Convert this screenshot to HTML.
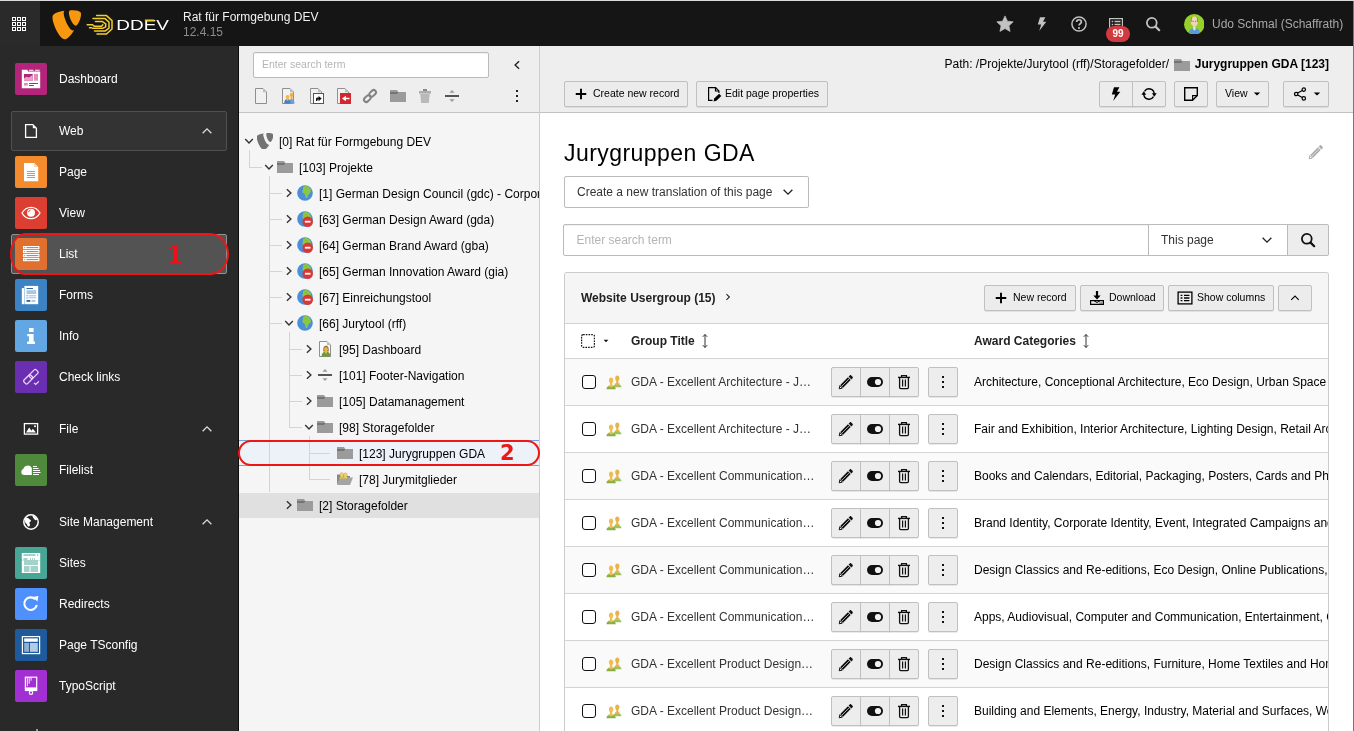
<!DOCTYPE html>
<html lang="en"><head><meta charset="utf-8"><title>List - Jurygruppen GDA [123]</title>
<style>
*{box-sizing:border-box;margin:0;padding:0}
html,body{width:1354px;height:731px;overflow:hidden;background:#fff}
body{font-family:"Liberation Sans",Arial,sans-serif;font-size:12px;color:#000;position:relative}
svg{display:block}
.abs{position:absolute}
.gs{will-change:transform}
#topline{position:absolute;left:0;top:0;width:1354px;height:1px;background:#dcdcdc}
#topbar{position:absolute;left:0;top:1px;width:1354px;height:45px;background:#151515;color:#fff}
#gridbtn{position:absolute;left:0;top:0;width:40px;height:45px;background:#2a2a2a}
#menu{position:absolute;left:0;top:46px;width:238px;height:685px;background:#292929;color:#fff}
#menuline{position:absolute;left:238px;top:46px;width:1px;height:685px;background:#0c0c0c}
.mi{position:absolute;left:15px;width:32px;height:32px;border-radius:2px}
.mi svg{position:absolute;left:6px;top:6px}
.ml{position:absolute;left:59px;font-size:12px;line-height:14px;color:#fff;white-space:nowrap}
.mg{position:absolute;left:23px}
#tree{position:absolute;left:239px;top:46px;width:300px;height:685px;background:#f5f5f5;overflow:hidden}
#treeborder{position:absolute;left:539px;top:46px;width:1px;height:685px;background:#cdcdcd}
#treetb{position:absolute;left:0;top:0;width:300px;height:67px;background:#eee;border-bottom:1px solid #c3c3c3}
.tn{position:absolute;left:0;width:300px;height:26px}
.tn .tx{position:absolute;top:7px;font-size:12px;line-height:14px;white-space:nowrap;color:#000}
.tn svg{position:absolute;top:5px}
.tl{position:absolute;background:#d4d4d4}
#content{position:absolute;left:540px;top:46px;width:813px;height:685px;background:#fff;overflow:hidden}
#rightedge{position:absolute;left:1353px;top:1px;width:1px;height:730px;background:#777}
#dochead{position:absolute;left:0;top:0;width:813px;height:67px;background:#eee;border-bottom:1px solid #c3c3c3}
.btn{position:absolute;height:26px;background:#ececec;border:1px solid #c0c0c0;border-radius:2px;font-size:10.5px;line-height:23px;color:#000;white-space:nowrap;box-shadow:0 1px 0 rgba(0,0,0,.08)}
.btn svg{position:absolute}
.btn span{position:absolute;top:0}
h1{position:absolute;font-weight:400;white-space:nowrap}
.row{position:absolute;left:0;width:763px;height:47px;border-top:1px solid #d4d4d4}
.row .cb{position:absolute;left:17px;top:16px;width:14px;height:14px;border:1.5px solid #111;border-radius:3px;background:#fff}
.row .gt{position:absolute;left:66px;top:16px;font-size:12px;line-height:14px;color:#333;white-space:nowrap}
.row .ac{position:absolute;left:409px;top:16px;font-size:12px;line-height:14px;color:#000;white-space:nowrap}
.ib{position:absolute;top:8px;width:30px;height:30px;background:#ededed;border:1px solid #c0c0c0;box-shadow:0 1px 0 rgba(0,0,0,.08)}
.ib svg{position:absolute;left:6px;top:6px}
</style></head>
<body>
<div id="topline"></div>
<div id="topbar" class="gs">
<div id="gridbtn"><svg width="16" height="16" viewBox="0 0 16 16" style="color:#fff;position:absolute;left:11px;top:15px"><rect x="1.5" y="1.5" width="3" height="3" fill="none" stroke="currentColor" stroke-width="1"/><rect x="6.5" y="1.5" width="3" height="3" fill="none" stroke="currentColor" stroke-width="1"/><rect x="11.5" y="1.5" width="3" height="3" fill="none" stroke="currentColor" stroke-width="1"/><rect x="1.5" y="6.5" width="3" height="3" fill="none" stroke="currentColor" stroke-width="1"/><rect x="6.5" y="6.5" width="3" height="3" fill="none" stroke="currentColor" stroke-width="1"/><rect x="11.5" y="6.5" width="3" height="3" fill="none" stroke="currentColor" stroke-width="1"/><rect x="1.5" y="11.5" width="3" height="3" fill="none" stroke="currentColor" stroke-width="1"/><rect x="6.5" y="11.5" width="3" height="3" fill="none" stroke="currentColor" stroke-width="1"/><rect x="11.5" y="11.5" width="3" height="3" fill="none" stroke="currentColor" stroke-width="1"/></svg></div>
<svg class="abs" style="left:47.6px;top:4.6px" width="37.5" height="37.5" viewBox="0 0 16 16"><path d="M11.1 10.3c-.2 0-.3.1-.5.1-1.6 0-3.9-5.5-3.9-7.3 0-.7.2-.9.4-1.1-1.9.2-4.2.9-4.9 1.8-.2.2-.3.6-.3 1 0 2.9 3.1 9.4 5.2 9.4 1 0 2.7-1.6 4-3.9M10.1 1.8c2 0 4 .3 4 1.5 0 2.3-1.5 5.1-2.2 5.1-1.3 0-3-3.7-3-5.5 0-.9.3-1.1 1.2-1.1" fill="#f8980f"/></svg>
<svg class="abs" style="left:86px;top:13px" width="86" height="22" viewBox="0 0 86 22"><g fill="none" stroke="#f2cd2e" stroke-width="1.5" stroke-linejoin="round" stroke-linecap="round"><path d="M10.6 1.6h9.9L26 6.6V15l-5.5 5h-9.5"/><path d="M7 4.6h12l4 3.5v6l-4 3H8.5"/><path d="M9.5 7.6h7l3.2 2.2v3L17 14.2H6.5"/><path d="M1.2 10.8h5.3l1.8 1.4h7.2l1.3-1.3"/><path d="M3.5 13.8h2"/></g><text x="30.3" y="15.7" font-family="Liberation Sans,Arial,sans-serif" font-size="14" fill="#fff" textLength="52.6" lengthAdjust="spacingAndGlyphs">DDEV</text><rect x="58.9" y="5.5" width="9.3" height="1.7" fill="#f2cd2e"/></svg>
<div class="abs" style="left:183px;top:9px;font-size:12px;line-height:14px;color:#f2f2f2;white-space:nowrap">Rat für Formgebung DEV</div>
<div class="abs" style="left:183px;top:24px;font-size:12px;line-height:14px;color:#8c8c8c;white-space:nowrap">12.4.15</div>
<svg width="18" height="18" viewBox="0 0 16 16" style="color:#c2c2c2;position:absolute;left:996px;top:14px"><path d="M8 .8l2.2 4.7 5.1.6-3.8 3.5 1 5L8 12.1 3.5 14.6l1-5L.7 6.1l5.1-.6z" fill="currentColor" stroke="currentColor" stroke-width=".6" stroke-linejoin="round"/></svg>
<svg width="16" height="16" viewBox="0 0 16 16" style="color:#c2c2c2;position:absolute;left:1033px;top:15px"><path d="M7 1.2h5.4L10 5.7h3.3L6.2 14.9l2-6.5H4.8z" fill="currentColor"/></svg>
<svg width="18" height="18" viewBox="0 0 16 16" style="color:#c2c2c2;position:absolute;left:1070px;top:14px"><circle cx="8" cy="8" r="6.3" fill="none" stroke="currentColor" stroke-width="1.3"/><path d="M5.9 6.3c0-1.2.9-2.1 2.1-2.1s2.1.8 2.1 2c0 1.5-2.1 1.6-2.1 3.1" fill="none" stroke="currentColor" stroke-width="1.5"/><circle cx="8" cy="11.6" r=".95" fill="currentColor"/></svg>
<svg width="16" height="16" viewBox="0 0 16 16" style="color:#c2c2c2;position:absolute;left:1108px;top:15px"><rect x="1.6" y="2.6" width="12.8" height="10.8" fill="none" stroke="currentColor" stroke-width="1.2"/><path d="M3.7 5.5h1.5M6.5 5.5h6M3.7 8.5h1.5M6.5 8.5h6" stroke="currentColor" stroke-width="1.6"/></svg>
<div class="abs" style="left:1106px;top:25px;width:24px;height:16px;border-radius:8px;background:#d13a3f;color:#fff;font-size:10px;font-weight:700;line-height:16px;text-align:center">99</div>
<svg width="16" height="16" viewBox="0 0 16 16" style="color:#c2c2c2;position:absolute;left:1145px;top:15px"><circle cx="6.8" cy="6.8" r="4.9" fill="none" stroke="currentColor" stroke-width="1.8"/><path d="M10.6 10.6l3.6 3.6" stroke="currentColor" stroke-width="2.2" stroke-linecap="round"/></svg>
<svg class="abs" style="left:1183.6px;top:12.8px" width="20.6" height="20.6" viewBox="0 0 22 22"><defs><clipPath id="av"><circle cx="11" cy="11" r="11"/></clipPath></defs><g clip-path="url(#av)"><rect width="22" height="22" fill="#97d02b"/><path d="M4.8 23c0-5.2 1.7-7.7 6.3-7.7s6.3 2.5 6.3 7.7z" fill="#5b9bd5"/><path d="M10 13h2.2v3.2l-1.1 1.5L10 16.2z" fill="#e9f3dc"/><ellipse cx="11.1" cy="8" rx="3.8" ry="5.3" fill="#f1d3b8"/><path d="M7.3 8.5c-.4-3 .3-5 1.5-5.6-.6 1.5-.7 3.5-.6 5.6zM14.9 8.5c.4-3-.3-5-1.5-5.6.6 1.5.7 3.5.6 5.6z" fill="#9a7a55"/><circle cx="9.6" cy="7.7" r=".55" fill="#5a4634"/><circle cx="12.6" cy="7.7" r=".55" fill="#5a4634"/></g></svg>
<div class="abs" style="left:1212px;top:16px;font-size:12px;line-height:14px;color:#a8a8a8;white-space:nowrap">Udo Schmal (Schaffrath)</div>
</div>
<div id="menu" class="gs">
<div class="mi" style="top:17px;background:#b2257a"><svg width="20" height="20" viewBox="0 0 20 20" style=""><path d="M.8.8h5.6l.7 1.7H19.2v16.7H.8z" fill="#fff"/><path d="M8 .8h4.5v.9H8zM14 .8h4.6v.9H14z" fill="#fff"/><path d="M3 5h8.7v6.7H3z" fill="#b2257a"/><path d="M3 9.2l2.6-1.5 2.4.8 3.7-2.7v5.9H3z" fill="#e9a3c9"/><path d="M13 5h4v6.7h-4z" fill="#e58bb8"/><path d="M3 14h3.8v2.6H3z" fill="#e58bb8"/><path d="M8 14h9v.9H8zM8 16h4.8v.9H8z" fill="#b2257a"/></svg></div>
<div class="ml" style="top:26px">Dashboard</div>
<div class="abs" style="left:11px;top:65px;width:216px;height:40px;background:#333;border:1px solid #505050;border-radius:2px"></div>
<div class="mg" style="top:77px"><svg width="16" height="16" viewBox="0 0 16 16" style=""><path d="M2.6 1.6h7.2l3.6 3.6v9.2H2.6z" fill="none" stroke="#fff" stroke-width="1.3"/><path d="M9.8 1.6v3.6h3.6z" fill="#fff"/></svg></div>
<div class="ml" style="top:78px">Web</div>
<svg width="14" height="14" viewBox="0 0 16 16" style="color:#dcdcdc;position:absolute;left:200px;top:78px"><path d="M3 10.5l5-5 5 5" fill="none" stroke="currentColor" stroke-width="1.5"/></svg>
<div class="mi" style="top:110px;background:#f48b2d"><svg width="20" height="20" viewBox="0 0 20 20" style=""><path d="M3 .9h10.2l4 4V19.2H3z" fill="#fff"/><path d="M13.2.9v4h4z" fill="#fbd3ad"/><path d="M6 9h8v1H6zM6 11h8v1H6zM6 13h8v1H6zM6 15h8v1H6z" fill="#f48b2d"/></svg></div>
<div class="ml" style="top:119px">Page</div>
<div class="mi" style="top:151px;background:#dc3e32"><svg width="20" height="20" viewBox="0 0 20 20" style=""><path d="M1 10C3.2 6 6.3 4.3 10 4.3S16.8 6 19 10c-2.2 4-5.3 5.7-9 5.7S3.2 14 1 10z" fill="none" stroke="#fff" stroke-width="1.3"/><circle cx="10" cy="9.7" r="4" fill="#fff"/><path d="M7.6 9.3a2.5 2.5 0 0 1 2-2.3" fill="none" stroke="#dc3e32" stroke-width=".9"/></svg></div>
<div class="ml" style="top:160px">View</div>
<div class="abs" style="left:11px;top:188px;width:216px;height:40px;background:#535353;border:1px solid #8d9492;border-radius:2px"></div>
<div class="mi" style="top:192px;background:#e0702f"><svg width="20" height="20" viewBox="0 0 20 20" style=""><rect x="2" y="2" width="16.4" height="3.2" fill="#fff"/><rect x="5.5" y="3.1" width="11.8" height="1" fill="#e0702f"/><rect x="3.2" y="3.1" width="1" height="1" fill="#e0702f"/><rect x="2" y="6" width="16.4" height="3.2" fill="#fff"/><rect x="5.5" y="7.1" width="11.8" height="1" fill="#e0702f"/><rect x="3.2" y="7.1" width="1" height="1" fill="#e0702f"/><rect x="2" y="10" width="16.4" height="3.2" fill="#fff"/><rect x="5.5" y="11.1" width="11.8" height="1" fill="#e0702f"/><rect x="3.2" y="11.1" width="1" height="1" fill="#e0702f"/><rect x="2" y="14" width="16.4" height="3.2" fill="#fff"/><rect x="5.5" y="15.1" width="11.8" height="1" fill="#e0702f"/><rect x="3.2" y="15.1" width="1" height="1" fill="#e0702f"/></svg></div>
<div class="ml" style="top:201px">List</div>
<div class="mi" style="top:233px;background:#3d82c3"><svg width="20" height="20" viewBox="0 0 20 20" style=""><path d="M.8 3.1h2.2V19.2H.8z" fill="#fff"/><path d="M3.4.9h13.8V19.2H3.4z" fill="#fff"/><path d="M5.5 3h6.5v1H5.5z" fill="#2f6aa6"/><path d="M5.5 5.2h9.7V9H5.5z" fill="#a9c6e4"/><path d="M5.5 10.3h1v1h-1zM5.5 12.4h1v1h-1z" fill="#2f6aa6"/><path d="M7.5 10.4h7.7v.8H7.5zM7.5 12.5h7.7v.8H7.5z" fill="#7ba6d2"/><path d="M5.5 15h3.8v1.9H5.5z" fill="#2f6aa6"/><path d="M10.5 15h3.8v1.9h-3.8z" fill="#a9c6e4"/></svg></div>
<div class="ml" style="top:242px">Forms</div>
<div class="mi" style="top:274px;background:#62a7e3"><svg width="20" height="20" viewBox="0 0 20 20" style=""><path d="M8 2h4.6v4H8zM6.2 8h6.4v7.5H14V18H6.2v-2.5H8v-5.2H6.2z" fill="#fff"/></svg></div>
<div class="ml" style="top:283px">Info</div>
<div class="mi" style="top:315px;background:#6a2fb0"><svg width="20" height="20" viewBox="0 0 20 20" style=""><g fill="none" stroke="#f1dcff" stroke-width="1.2"><rect x="-4.8" y="-2.5" width="9.6" height="5" rx="1.4" transform="translate(7.2 12.4) rotate(-45)"/><rect x="-4.8" y="-2.5" width="9.6" height="5" rx="1.4" transform="translate(12.6 7) rotate(-45)"/><path d="M13 15.8l1.7 1.7 3.2-3.2"/></g></svg></div>
<div class="ml" style="top:324px">Check links</div>
<div class="mg" style="top:375px"><svg width="16" height="16" viewBox="0 0 16 16" style=""><rect x="1.4" y="2.6" width="13.2" height="10.5" fill="none" stroke="#fff" stroke-width="1.3"/><path d="M3 11.5l3.2-5 2.2 3.3 1.5-2 3 3.7z" fill="#fff"/><circle cx="12" cy="5.2" r="1" fill="#fff"/></svg></div>
<div class="ml" style="top:376px">File</div>
<svg width="14" height="14" viewBox="0 0 16 16" style="color:#dcdcdc;position:absolute;left:200px;top:376px"><path d="M3 10.5l5-5 5 5" fill="none" stroke="currentColor" stroke-width="1.5"/></svg>
<div class="mi" style="top:408px;background:#4f8a3c"><svg width="20" height="20" viewBox="0 0 20 20" style=""><path d="M.3 12a3 3 0 0 1 2-2.9A4.6 4.6 0 0 1 10.8 8v7H3.3a3 3 0 0 1-3-3z" fill="#fff"/><path d="M12 6h4v1h-4zM12 8h5.5v1H12zM12 10h7v1h-7zM12 12h7.5v1H12zM12 14h6v1h-6z" fill="#fff"/></svg></div>
<div class="ml" style="top:417px">Filelist</div>
<div class="mg" style="top:468px"><svg width="16" height="16" viewBox="0 0 16 16" style=""><circle cx="8" cy="8" r="7.2" fill="none" stroke="#fff" stroke-width="1.5"/><path d="M2.2 4.2c1.5-.7 3.1-.4 3.7.5.5.9 2.1.9 2.1 2-.1 1-1.6 1-1.6 2.1 0 1 1 1.5.5 2.6-.5 1-1.7 1.6-2.3.6-.5-1-.5-2-1.5-2.5s-1.9-3.8-.9-5.3zM9.6 1.6c2.1.4 3.8 2 4.5 4-.9.8-2.1.7-2.8-.3-.7-1-2.2-2.5-1.7-3.7z" fill="#fff"/></svg></div>
<div class="ml" style="top:469px">Site Management</div>
<svg width="14" height="14" viewBox="0 0 16 16" style="color:#dcdcdc;position:absolute;left:200px;top:469px"><path d="M3 10.5l5-5 5 5" fill="none" stroke="currentColor" stroke-width="1.5"/></svg>
<div class="mi" style="top:501px;background:#49a596"><svg width="20" height="20" viewBox="0 0 20 20" style=""><path d="M.8 0h18.4v7.5H.8z" fill="#fff"/><path d="M2.5 1.6h12v.9h-12zM16 1.5h1.3v1.1H16z" fill="#49a596"/><path d="M2.5 5.5h4v.9h-4zM9 5.5h1v.9H9zM11 5.5h1v.9h-1zM13 5.5h1v.9h-1z" fill="#49a596"/><path d="M.8 7.5H3V20H.8zM17 7.5h2.2V20H17z" fill="#fff"/><path d="M3 8h14v4H3z" fill="#a4d2ca"/><path d="M3 12h14v1H3zM3 19h14v1H3zM8.2 13h1.6v6H8.2z" fill="#fff"/><path d="M3 13h5.2v6H3zM9.8 13H17v6H9.8z" fill="#a4d2ca"/></svg></div>
<div class="ml" style="top:510px">Sites</div>
<div class="mi" style="top:542px;background:#4d90fe"><svg width="20" height="20" viewBox="0 0 20 20" style=""><path d="M14.3 5.4A6.3 6.3 0 1 0 15.8 11" fill="none" stroke="#fff" stroke-width="2.1"/><path d="M11.8 3l5.6-1-1 5.6z" fill="#fff"/></svg></div>
<div class="ml" style="top:551px">Redirects</div>
<div class="mi" style="top:583px;background:#1e5a9c"><svg width="20" height="20" viewBox="0 0 20 20" style=""><rect x="1.4" y="1.6" width="17.2" height="17" fill="none" stroke="#fff" stroke-width="1.2"/><path d="M3.2 3.4h13.6v3.4H3.2z" fill="#fff"/><path d="M3.2 8h4.8v8.8H3.2z" fill="#8fb0d6"/><path d="M9 8h7.8v8.8H9z" fill="#b4cbe6"/></svg></div>
<div class="ml" style="top:592px">Page TSconfig</div>
<div class="mi" style="top:624px;background:#a22fd1"><svg width="20" height="20" viewBox="0 0 20 20" style=""><rect x="4.4" y="1.2" width="11.3" height="10.8" fill="none" stroke="#fff" stroke-width="1.2"/><path d="M6.3 1.2v9M8.2 1.2v6.5M10.1 1.2v3.5" stroke="#fff" stroke-width=".9"/><path d="M3.8 12h12.5v3.1H3.8z" fill="#fff"/><circle cx="10" cy="16.7" r="1.7" fill="#a22fd1" stroke="#fff" stroke-width="1.2"/></svg></div>
<div class="ml" style="top:633px">TypoScript</div>
<div class="abs" style="left:36px;top:683px;width:2px;height:2px;background:#999"></div>
</div><div id="menuline"></div>
<div class="abs gs" style="left:9.5px;top:232.5px;width:218.5px;height:42px;border:2.5px solid #ee1515;border-radius:15px 19px 19px 15px/21px"></div>
<div class="abs gs" style="left:167px;top:241px;font-family:'DejaVu Serif','Liberation Serif',serif;font-weight:700;font-size:23.5px;line-height:29px;color:#f01018">1</div>
<div id="tree" class="gs">
<div id="treetb">
<div class="abs" style="left:14px;top:6px;width:236px;height:26px;background:#fff;border:1px solid #bbb;border-radius:2px;box-shadow:inset 0 1px 1px rgba(0,0,0,.06)"><span class="abs" style="left:8px;top:4px;font-size:10.5px;line-height:14px;color:#b5b5b5;white-space:nowrap">Enter search term</span></div>
<svg width="16" height="16" viewBox="0 0 16 16" style="color:#222;position:absolute;left:270px;top:11px"><path d="M10.1 4.2l-4 3.8 4 3.8" fill="none" stroke="currentColor" stroke-width="1.4"/></svg>
<svg width="16" height="16" viewBox="0 0 16 16" style="position:absolute;left:14px;top:42px"><path d="M2.5.5h7.5l3.5 3.5v11.5h-11z" fill="#f1f1f1" stroke="#8f8f8f" stroke-width="1"/><path d="M10 .8v3.4h3.4z" fill="#bdbdbd"/></svg>
<svg width="16" height="16" viewBox="0 0 16 16" style="position:absolute;left:41px;top:42px"><path d="M2.5.5h7.5l3.5 3.5v11.5h-11z" fill="#f1f1f1" stroke="#8f8f8f" stroke-width="1"/><path d="M10 .8v3.4h3.4z" fill="#bdbdbd"/><path d="M8.5 15.5c0-3.2 1.2-4.6 3-4.6s3 1.4 3 4.6z" fill="#6ea0dc"/><circle cx="11.6" cy="6.8" r="1.9" fill="#f3ad36"/><path d="M10.7 7.6h1.8v3.4h-1.8z" fill="#f3ad36"/><path d="M4.2 15.5c0-3 1.3-4.4 3.2-4.4s3.2 1.4 3.2 4.4z" fill="#4a7fc6"/><circle cx="7.6" cy="8.8" r="1.9" fill="#f6b73f"/><path d="M6.7 9.6h1.8v2.6l-.9.7-.9-.7z" fill="#f6b73f"/></svg>
<svg width="16" height="16" viewBox="0 0 16 16" style="position:absolute;left:69px;top:42px"><path d="M2.5.5h7.5l3.5 3.5v11.5h-11z" fill="#f1f1f1" stroke="#8f8f8f" stroke-width="1"/><path d="M10 .8v3.4h3.4z" fill="#bdbdbd"/><rect x="5.5" y="5.5" width="10" height="10" fill="#fff" stroke="#555" stroke-width="1"/><path d="M8 13v-1.8c0-1 .6-1.6 1.6-1.6h1V7.9l3.1 2.7-3.1 2.7v-1.7h-.7c-.3 0-.5.2-.5.5V13z" fill="#111"/></svg>
<svg width="16" height="16" viewBox="0 0 16 16" style="position:absolute;left:96px;top:42px"><path d="M2.5.5h7.5l3.5 3.5v11.5h-11z" fill="#f1f1f1" stroke="#8f8f8f" stroke-width="1"/><path d="M10 .8v3.4h3.4z" fill="#bdbdbd"/><rect x="5" y="5" width="11" height="11" fill="#d0282e"/><path d="M14.5 9.7h-3.6V7.8L7 10.5l3.9 2.7v-1.9h3.6z" fill="#fff"/></svg>
<svg width="16" height="16" viewBox="0 0 16 16" style="position:absolute;left:123px;top:42px"><g fill="none" stroke="#828282" stroke-width="2"><rect x="-3.7" y="-2.3" width="7.4" height="4.6" rx="2.3" transform="translate(5.3 10.7) rotate(-45)"/><rect x="-3.7" y="-2.3" width="7.4" height="4.6" rx="2.3" transform="translate(10.7 5.3) rotate(-45)"/></g></svg>
<svg width="16" height="16" viewBox="0 0 16 16" style="position:absolute;left:151px;top:42px"><path d="M0 2h7l1.3 2H16v10H0z" fill="#9b9b9b"/><path d="M0 4h8.3l-.9 1.5c-.3.4-.7.6-1.2.6H0z" fill="#000" opacity=".25"/></svg>
<svg width="16" height="16" viewBox="0 0 16 16" style="position:absolute;left:178px;top:42px"><path d="M6 1h4v2H6z" fill="#8a8a8a"/><path d="M2 3h12v2.6H2z" fill="#adadad"/><path d="M3.3 5.9h9.4l-.9 9.1H4.2z" fill="#b9b9b9"/></svg>
<svg width="16" height="16" viewBox="0 0 16 16" style="position:absolute;left:205px;top:42px"><path d="M1 7h14v2H1z" fill="#555"/><path d="M5.4 4.7h5.2L8 2.1zM5.4 11.3h5.2L8 13.9z" fill="#9a9a9a"/></svg>
<svg width="16" height="16" viewBox="0 0 16 16" style="color:#222;position:absolute;left:270px;top:42px"><path d="M7 2h2v2H7zM7 7h2v2H7zM7 12h2v2H7z" fill="currentColor"/></svg>
</div>
<div class="abs" style="left:0;top:394px;width:300px;height:26px;background:#edf2f9;border-top:1px solid #7a9fdc;border-bottom:1px solid #7a9fdc"></div>
<div class="abs" style="left:0;top:447px;width:300px;height:25px;background:#e0e0e0"></div>
<div class="tl" style="left:10px;top:104px;width:1px;height:18px"></div>
<div class="tl" style="left:10px;top:121px;width:13px;height:1px"></div>
<div class="tl" style="left:30px;top:130px;width:1px;height:316px"></div>
<div class="tl" style="left:30px;top:147px;width:13px;height:1px"></div>
<div class="tl" style="left:30px;top:173px;width:13px;height:1px"></div>
<div class="tl" style="left:30px;top:199px;width:13px;height:1px"></div>
<div class="tl" style="left:30px;top:225px;width:13px;height:1px"></div>
<div class="tl" style="left:30px;top:251px;width:13px;height:1px"></div>
<div class="tl" style="left:30px;top:277px;width:13px;height:1px"></div>
<div class="tl" style="left:50px;top:286px;width:1px;height:96px"></div>
<div class="tl" style="left:50px;top:303px;width:13px;height:1px"></div>
<div class="tl" style="left:50px;top:329px;width:13px;height:1px"></div>
<div class="tl" style="left:50px;top:355px;width:13px;height:1px"></div>
<div class="tl" style="left:50px;top:381px;width:13px;height:1px"></div>
<div class="tl" style="left:70px;top:390px;width:1px;height:44px"></div>
<div class="tl" style="left:70px;top:407px;width:21px;height:1px"></div>
<div class="tl" style="left:70px;top:433px;width:21px;height:1px"></div>
<div class="tn" style="top:82px">
<svg width="16" height="16" viewBox="0 0 16 16" style="color:#333;left:2px;top:5px"><path d="M4.2 5.9l3.8 4 3.8-4" fill="none" stroke="currentColor" stroke-width="1.4"/></svg>
<svg width="16" height="16" viewBox="0 0 16 16" style="left:18px;top:5px"><path d="M11.1 10.3c-.2 0-.3.1-.5.1-1.6 0-3.9-5.5-3.9-7.3 0-.7.2-.9.4-1.1-1.9.2-4.2.9-4.9 1.8-.2.2-.3.6-.3 1 0 2.9 3.1 9.4 5.2 9.4 1 0 2.7-1.6 4-3.9M10.1 1.8c2 0 4 .3 4 1.5 0 2.3-1.5 5.1-2.2 5.1-1.3 0-3-3.7-3-5.5 0-.9.3-1.1 1.2-1.1" fill="#737373" transform="translate(8.1 8.4) scale(1.36) translate(-8.05 -7.9)"/></svg>
<span class="tx" style="left:40px">[0] Rat für Formgebung DEV</span>
</div>
<div class="tn" style="top:108px">
<svg width="16" height="16" viewBox="0 0 16 16" style="color:#333;left:22px;top:5px"><path d="M4.2 5.9l3.8 4 3.8-4" fill="none" stroke="currentColor" stroke-width="1.4"/></svg>
<svg width="16" height="16" viewBox="0 0 16 16" style="left:38px;top:5px"><path d="M0 2h7l1.3 2H16v10H0z" fill="#9b9b9b"/><path d="M0 4h8.3l-.9 1.5c-.3.4-.7.6-1.2.6H0z" fill="#000" opacity=".25"/></svg>
<span class="tx" style="left:60px">[103] Projekte</span>
</div>
<div class="tn" style="top:134px">
<svg width="16" height="16" viewBox="0 0 16 16" style="color:#333;left:42px;top:5px"><path d="M5.9 4.2l4 3.8-4 3.8" fill="none" stroke="currentColor" stroke-width="1.4"/></svg>
<svg width="16" height="16" viewBox="0 0 16 16" style="left:58px;top:5px"><circle cx="8" cy="8" r="7.8" fill="#4a90d9"/><path d="M6.2 2.1c1-.9 2.6-1.4 4.2-.9 1.6.6 2.9 1.9 3.4 3.4.3 1 .2 2-.3 2.8-.5.9-1.5 1.3-2 2.1-.5.7-.5 1.6-.9 2.4-.3.7-1 1.3-1.6 1-.6-.3-.6-1.2-.6-1.9 0-.8-.2-1.6-.8-2.1-.6-.6-1.5-.8-1.9-1.5-.5-.8-.2-1.8.2-2.6.4-.9-.4-1.9.3-2.7z" fill="#8dc63f"/><path d="M8.5 3.5c.5-.2 1 .1 1 .6" fill="none" stroke="#6aa52c" stroke-width=".6"/></svg>
<span class="tx" style="left:80px">[1] German Design Council (gdc) - Corporate</span>
</div>
<div class="tn" style="top:160px">
<svg width="16" height="16" viewBox="0 0 16 16" style="color:#333;left:42px;top:5px"><path d="M5.9 4.2l4 3.8-4 3.8" fill="none" stroke="currentColor" stroke-width="1.4"/></svg>
<svg width="16" height="16" viewBox="0 0 16 16" style="left:58px;top:5px"><circle cx="8" cy="8" r="7.8" fill="#4a90d9"/><path d="M6.2 2.1c1-.9 2.6-1.4 4.2-.9 1.6.6 2.9 1.9 3.4 3.4.3 1 .2 2-.3 2.8-.5.9-1.5 1.3-2 2.1-.5.7-.5 1.6-.9 2.4-.3.7-1 1.3-1.6 1-.6-.3-.6-1.2-.6-1.9 0-.8-.2-1.6-.8-2.1-.6-.6-1.5-.8-1.9-1.5-.5-.8-.2-1.8.2-2.6.4-.9-.4-1.9.3-2.7z" fill="#8dc63f"/><path d="M8.5 3.5c.5-.2 1 .1 1 .6" fill="none" stroke="#6aa52c" stroke-width=".6"/><circle cx="10.7" cy="10.7" r="5.3" fill="#d73a36"/><path d="M7.9 10.7h5.6" stroke="#fff" stroke-width="1.8"/></svg>
<span class="tx" style="left:80px">[63] German Design Award (gda)</span>
</div>
<div class="tn" style="top:186px">
<svg width="16" height="16" viewBox="0 0 16 16" style="color:#333;left:42px;top:5px"><path d="M5.9 4.2l4 3.8-4 3.8" fill="none" stroke="currentColor" stroke-width="1.4"/></svg>
<svg width="16" height="16" viewBox="0 0 16 16" style="left:58px;top:5px"><circle cx="8" cy="8" r="7.8" fill="#4a90d9"/><path d="M6.2 2.1c1-.9 2.6-1.4 4.2-.9 1.6.6 2.9 1.9 3.4 3.4.3 1 .2 2-.3 2.8-.5.9-1.5 1.3-2 2.1-.5.7-.5 1.6-.9 2.4-.3.7-1 1.3-1.6 1-.6-.3-.6-1.2-.6-1.9 0-.8-.2-1.6-.8-2.1-.6-.6-1.5-.8-1.9-1.5-.5-.8-.2-1.8.2-2.6.4-.9-.4-1.9.3-2.7z" fill="#8dc63f"/><path d="M8.5 3.5c.5-.2 1 .1 1 .6" fill="none" stroke="#6aa52c" stroke-width=".6"/><circle cx="10.7" cy="10.7" r="5.3" fill="#d73a36"/><path d="M7.9 10.7h5.6" stroke="#fff" stroke-width="1.8"/></svg>
<span class="tx" style="left:80px">[64] German Brand Award (gba)</span>
</div>
<div class="tn" style="top:212px">
<svg width="16" height="16" viewBox="0 0 16 16" style="color:#333;left:42px;top:5px"><path d="M5.9 4.2l4 3.8-4 3.8" fill="none" stroke="currentColor" stroke-width="1.4"/></svg>
<svg width="16" height="16" viewBox="0 0 16 16" style="left:58px;top:5px"><circle cx="8" cy="8" r="7.8" fill="#4a90d9"/><path d="M6.2 2.1c1-.9 2.6-1.4 4.2-.9 1.6.6 2.9 1.9 3.4 3.4.3 1 .2 2-.3 2.8-.5.9-1.5 1.3-2 2.1-.5.7-.5 1.6-.9 2.4-.3.7-1 1.3-1.6 1-.6-.3-.6-1.2-.6-1.9 0-.8-.2-1.6-.8-2.1-.6-.6-1.5-.8-1.9-1.5-.5-.8-.2-1.8.2-2.6.4-.9-.4-1.9.3-2.7z" fill="#8dc63f"/><path d="M8.5 3.5c.5-.2 1 .1 1 .6" fill="none" stroke="#6aa52c" stroke-width=".6"/><circle cx="10.7" cy="10.7" r="5.3" fill="#d73a36"/><path d="M7.9 10.7h5.6" stroke="#fff" stroke-width="1.8"/></svg>
<span class="tx" style="left:80px">[65] German Innovation Award (gia)</span>
</div>
<div class="tn" style="top:238px">
<svg width="16" height="16" viewBox="0 0 16 16" style="color:#333;left:42px;top:5px"><path d="M5.9 4.2l4 3.8-4 3.8" fill="none" stroke="currentColor" stroke-width="1.4"/></svg>
<svg width="16" height="16" viewBox="0 0 16 16" style="left:58px;top:5px"><circle cx="8" cy="8" r="7.8" fill="#4a90d9"/><path d="M6.2 2.1c1-.9 2.6-1.4 4.2-.9 1.6.6 2.9 1.9 3.4 3.4.3 1 .2 2-.3 2.8-.5.9-1.5 1.3-2 2.1-.5.7-.5 1.6-.9 2.4-.3.7-1 1.3-1.6 1-.6-.3-.6-1.2-.6-1.9 0-.8-.2-1.6-.8-2.1-.6-.6-1.5-.8-1.9-1.5-.5-.8-.2-1.8.2-2.6.4-.9-.4-1.9.3-2.7z" fill="#8dc63f"/><path d="M8.5 3.5c.5-.2 1 .1 1 .6" fill="none" stroke="#6aa52c" stroke-width=".6"/><circle cx="10.7" cy="10.7" r="5.3" fill="#d73a36"/><path d="M7.9 10.7h5.6" stroke="#fff" stroke-width="1.8"/></svg>
<span class="tx" style="left:80px">[67] Einreichungstool</span>
</div>
<div class="tn" style="top:264px">
<svg width="16" height="16" viewBox="0 0 16 16" style="color:#333;left:42px;top:5px"><path d="M4.2 5.9l3.8 4 3.8-4" fill="none" stroke="currentColor" stroke-width="1.4"/></svg>
<svg width="16" height="16" viewBox="0 0 16 16" style="left:58px;top:5px"><circle cx="8" cy="8" r="7.8" fill="#4a90d9"/><path d="M6.2 2.1c1-.9 2.6-1.4 4.2-.9 1.6.6 2.9 1.9 3.4 3.4.3 1 .2 2-.3 2.8-.5.9-1.5 1.3-2 2.1-.5.7-.5 1.6-.9 2.4-.3.7-1 1.3-1.6 1-.6-.3-.6-1.2-.6-1.9 0-.8-.2-1.6-.8-2.1-.6-.6-1.5-.8-1.9-1.5-.5-.8-.2-1.8.2-2.6.4-.9-.4-1.9.3-2.7z" fill="#8dc63f"/><path d="M8.5 3.5c.5-.2 1 .1 1 .6" fill="none" stroke="#6aa52c" stroke-width=".6"/></svg>
<span class="tx" style="left:80px">[66] Jurytool (rff)</span>
</div>
<div class="tn" style="top:290px">
<svg width="16" height="16" viewBox="0 0 16 16" style="color:#333;left:62px;top:5px"><path d="M5.9 4.2l4 3.8-4 3.8" fill="none" stroke="currentColor" stroke-width="1.4"/></svg>
<svg width="16" height="16" viewBox="0 0 16 16" style="left:78px;top:5px"><path d="M2.5.5h7.5l3.5 3.5v11.5h-11z" fill="#fafafa" stroke="#8f8f8f" stroke-width="1"/><path d="M10 .8v3.4h3.4z" fill="#bdbdbd"/><path d="M6.3 8.4c0-2.2 1.1-3.6 2.7-3.6s2.7 1.4 2.7 3.6v2.2H6.3z" fill="#8a6a3a"/><ellipse cx="9" cy="8.3" rx="1.8" ry="2.3" fill="#f2b33d"/><path d="M4.5 15.5c0-2.9 1.6-4.3 3-4.7l1.5 1.1 1.5-1.1c1.4.4 3 1.8 3 4.7z" fill="#6f9a3e"/><path d="M8 10.1h2v1.7l-1 .9-1-.9z" fill="#f2b33d"/></svg>
<span class="tx" style="left:100px">[95] Dashboard</span>
</div>
<div class="tn" style="top:316px">
<svg width="16" height="16" viewBox="0 0 16 16" style="color:#333;left:62px;top:5px"><path d="M5.9 4.2l4 3.8-4 3.8" fill="none" stroke="currentColor" stroke-width="1.4"/></svg>
<svg width="16" height="16" viewBox="0 0 16 16" style="left:78px;top:5px"><path d="M1 7h14v2H1z" fill="#555"/><path d="M5.4 4.7h5.2L8 2.1zM5.4 11.3h5.2L8 13.9z" fill="#9a9a9a"/></svg>
<span class="tx" style="left:100px">[101] Footer-Navigation</span>
</div>
<div class="tn" style="top:342px">
<svg width="16" height="16" viewBox="0 0 16 16" style="color:#333;left:62px;top:5px"><path d="M5.9 4.2l4 3.8-4 3.8" fill="none" stroke="currentColor" stroke-width="1.4"/></svg>
<svg width="16" height="16" viewBox="0 0 16 16" style="left:78px;top:5px"><path d="M0 2h7l1.3 2H16v10H0z" fill="#9b9b9b"/><path d="M0 4h8.3l-.9 1.5c-.3.4-.7.6-1.2.6H0z" fill="#000" opacity=".25"/></svg>
<span class="tx" style="left:100px">[105] Datamanagement</span>
</div>
<div class="tn" style="top:368px">
<svg width="16" height="16" viewBox="0 0 16 16" style="color:#333;left:62px;top:5px"><path d="M4.2 5.9l3.8 4 3.8-4" fill="none" stroke="currentColor" stroke-width="1.4"/></svg>
<svg width="16" height="16" viewBox="0 0 16 16" style="left:78px;top:5px"><path d="M0 2h7l1.3 2H16v10H0z" fill="#9b9b9b"/><path d="M0 4h8.3l-.9 1.5c-.3.4-.7.6-1.2.6H0z" fill="#000" opacity=".25"/></svg>
<span class="tx" style="left:100px">[98] Storagefolder</span>
</div>
<div class="tn" style="top:394px">
<svg width="16" height="16" viewBox="0 0 16 16" style="left:98px;top:5px"><path d="M0 2h7l1.3 2H16v10H0z" fill="#9b9b9b"/><path d="M0 4h8.3l-.9 1.5c-.3.4-.7.6-1.2.6H0z" fill="#000" opacity=".25"/></svg>
<span class="tx" style="left:120px">[123] Jurygruppen GDA</span>
</div>
<div class="tn" style="top:420px">
<svg width="16" height="16" viewBox="0 0 16 16" style="left:98px;top:5px"><path d="M0 14V3.5h5.5l1 1.5h6.5v2H3.2z" fill="#878787"/><path d="M0 14l3-7.5h13L13 14z" fill="#a4a4a4"/><path d="M2.6 7.6c0-1.2.5-2 1.2-2.4a1.9 1.9 0 1 1 2 0c.5.3.8.7 1 1.2.1-.4.3-.7.6-.9a1.9 1.9 0 1 1 2 0c.7.4 1.2 1.1 1.2 2.1z" fill="#ecd277" stroke="#c6a63c" stroke-width=".5"/><path d="M2.8 7.6l1.4-1.8 2 .8-1 1z" fill="#b8cf3c"/></svg>
<span class="tx" style="left:120px">[78] Jurymitglieder</span>
</div>
<div class="tn" style="top:446px">
<svg width="16" height="16" viewBox="0 0 16 16" style="color:#333;left:42px;top:5px"><path d="M5.9 4.2l4 3.8-4 3.8" fill="none" stroke="currentColor" stroke-width="1.4"/></svg>
<svg width="16" height="16" viewBox="0 0 16 16" style="left:58px;top:5px"><path d="M0 2h7l1.3 2H16v10H0z" fill="#9b9b9b"/><path d="M0 4h8.3l-.9 1.5c-.3.4-.7.6-1.2.6H0z" fill="#000" opacity=".25"/></svg>
<span class="tx" style="left:80px">[2] Storagefolder</span>
</div>
</div><div id="treeborder"></div>
<div class="abs gs" style="left:238px;top:440px;width:302px;height:26px;border:2.5px solid #ee1515;border-radius:13px"></div>
<div class="abs gs" style="left:500px;top:439px;font-family:'DejaVu Sans',sans-serif;font-weight:700;font-size:21px;line-height:28px;color:#ee1515">2</div>
<div id="content" class="gs">
<div id="dochead">
<div class="abs" style="right:24px;top:11px;font-size:12px;line-height:14px;white-space:nowrap;color:#000">Path: /Projekte/Jurytool (rff)/Storagefolder/ <span style="display:inline-block;width:16px;height:14px;vertical-align:top;position:relative;margin:0 1px 0 2px"><svg width="16" height="16" viewBox="0 0 16 16" style="position:absolute;left:0;top:0"><path d="M0 2h7l1.3 2H16v10H0z" fill="#9b9b9b"/><path d="M0 4h8.3l-.9 1.5c-.3.4-.7.6-1.2.6H0z" fill="#000" opacity=".25"/></svg></span> <b>Jurygruppen GDA [123]</b></div>
<div class="btn" style="left:24px;top:35px;width:124px;"><svg width="14" height="14" viewBox="0 0 16 16" style="color:#000;left:9px;top:5px"><path d="M6.9 2h2.2v4.9H14v2.2H9.1V14H6.9V9.1H2V6.9h4.9z" fill="currentColor"/></svg><span style="left:28px">Create new record</span></div>
<div class="btn" style="left:156px;top:35px;width:132px;"><svg width="16" height="16" viewBox="0 0 16 16" style="color:#000;left:9px;top:4px"><path d="M6.5 14.4H2.6V1.6h7l3.3 3.3v2.2" fill="none" stroke="currentColor" stroke-width="1.2"/><path d="M9.5 1.6v3.4h3.4" fill="none" stroke="currentColor" stroke-width="1.2"/><path d="M7.5 15.5l.7-2.9 4.9-4.9 2.2 2.2-4.9 4.9z" fill="currentColor"/></svg><span style="left:28px">Edit page properties</span></div>
<div class="btn" style="left:559px;top:35px;width:34px;border-radius:2px 0 0 2px"><svg width="16" height="16" viewBox="0 0 16 16" style="color:#000;left:7px;top:4px"><path d="M7 1.2h5.4L10 5.7h3.3L6.2 14.9l2-6.5H4.8z" fill="currentColor"/></svg></div>
<div class="btn" style="left:592px;top:35px;width:34px;border-radius:0 2px 2px 0"><svg width="16" height="16" viewBox="0 0 16 16" style="color:#000;left:8px;top:4px"><path d="M3.5 5.4A5.2 5.2 0 0 1 13.2 8" fill="none" stroke="currentColor" stroke-width="1.4"/><path d="M10.9 7.3h4.8l-2.4 3.5z" fill="currentColor"/><path d="M12.5 10.6A5.2 5.2 0 0 1 2.8 8" fill="none" stroke="currentColor" stroke-width="1.4"/><path d="M.4 8.7h4.8L2.8 5.2z" fill="currentColor"/></svg></div>
<div class="btn" style="left:634px;top:35px;width:34px;"><svg width="16" height="16" viewBox="0 0 16 16" style="color:#000;left:8px;top:4px"><path d="M1.7 1.7h12.6v7.8l-4.8 4.8H1.7z" fill="none" stroke="currentColor" stroke-width="1.4"/><path d="M14.3 9.6H9.6v4.7" fill="none" stroke="currentColor" stroke-width="1.1"/></svg></div>
<div class="btn" style="left:676px;top:35px;width:53px;"><span style="left:8px">View</span><svg width="16" height="16" viewBox="0 0 16 16" style="color:#000;left:32px;top:4px"><path d="M4.8 6.4h6.4L8 9.6z" fill="currentColor"/></svg></div>
<div class="btn" style="left:743px;top:35px;width:46px;"><svg width="16" height="16" viewBox="0 0 16 16" style="color:#000;left:8px;top:4px"><circle cx="4.2" cy="8" r="1.7" fill="none" stroke="currentColor" stroke-width="1.2"/><circle cx="11.8" cy="3.6" r="1.7" fill="none" stroke="currentColor" stroke-width="1.2"/><circle cx="11.8" cy="12.4" r="1.7" fill="none" stroke="currentColor" stroke-width="1.2"/><path d="M5.7 7.1l4.6-2.6M5.7 8.9l4.6 2.6" stroke="currentColor" stroke-width="1.2"/></svg><svg width="16" height="16" viewBox="0 0 16 16" style="color:#000;left:25px;top:4px"><path d="M4.8 6.4h6.4L8 9.6z" fill="currentColor"/></svg></div>
</div>
<h1 style="left:24px;top:91px;font-size:23px;line-height:32px;letter-spacing:.45px;color:#000">Jurygruppen GDA</h1>
<svg width="16" height="16" viewBox="0 0 16 16" style="color:#adadad;position:absolute;left:768px;top:98px"><path d="M10.6 2.6l1.2-1.2c.4-.4 1-.4 1.4 0l1.4 1.4c.4.4.4 1 0 1.4l-1.2 1.2z" fill="currentColor"/><path d="M9.9 3.3l2.8 2.8-7.6 7.6-2.8-2.8z" fill="currentColor"/><path d="M4 12l6.9-6.9" stroke="#ededed" stroke-width=".7"/><path d="M1.9 11.6L1.2 14.8l3.2-.7z" fill="none" stroke="currentColor" stroke-width="1"/></svg>
<div class="abs" style="left:24px;top:130px;width:245px;height:32px;border:1px solid #bbb;border-radius:2px;background:#fff"><span class="abs" style="left:12px;top:8px;font-size:12px;line-height:14px;color:#333;white-space:nowrap">Create a new translation of this page</span><svg width="14" height="14" viewBox="0 0 16 16" style="color:#222;position:absolute;left:216px;top:8px"><path d="M3 5.5l5 5 5-5" fill="none" stroke="currentColor" stroke-width="1.5"/></svg></div>
<div class="abs" style="left:23px;top:178px;width:586px;height:32px;border:1px solid #bbb;border-radius:2px 0 0 2px;background:#fff;box-shadow:inset 0 1px 1px rgba(0,0,0,.06)"><span class="abs" style="left:12.5px;top:8px;font-size:12px;line-height:14px;color:#b5b5b5;white-space:nowrap">Enter search term</span></div>
<div class="abs" style="left:608px;top:178px;width:140px;height:32px;border:1px solid #bbb;background:#fff"><span class="abs" style="left:12px;top:8px;font-size:12px;line-height:14px;color:#333;white-space:nowrap">This page</span><svg width="14" height="14" viewBox="0 0 16 16" style="color:#222;position:absolute;left:111px;top:8px"><path d="M3 5.5l5 5 5-5" fill="none" stroke="currentColor" stroke-width="1.5"/></svg></div>
<div class="abs" style="left:747px;top:178px;width:42px;height:32px;border:1px solid #bbb;border-radius:0 2px 2px 0;background:#ededed"><svg width="16" height="16" viewBox="0 0 16 16" style="color:#111;position:absolute;left:12px;top:7px"><circle cx="6.8" cy="6.8" r="4.9" fill="none" stroke="currentColor" stroke-width="1.8"/><path d="M10.6 10.6l3.6 3.6" stroke="currentColor" stroke-width="2.2" stroke-linecap="round"/></svg></div>
<div class="abs" style="left:24px;top:226px;width:765px;height:480px;border:1px solid #ccc;border-bottom:0;border-radius:3px 3px 0 0;background:#fff;overflow:hidden">
<div class="abs" style="left:0;top:0;width:763px;height:50px;background:#f5f5f5"></div>
<div class="abs" style="left:16px;top:18px;font-size:12px;font-weight:700;line-height:14px;color:#222;white-space:nowrap">Website Usergroup (15)</div>
<svg width="12" height="12" viewBox="0 0 16 16" style="color:#222;position:absolute;left:157px;top:18px"><path d="M5.9 4.2l4 3.8-4 3.8" fill="none" stroke="currentColor" stroke-width="1.4"/></svg>
<div class="btn" style="left:419px;top:12px;width:92px"><svg width="14" height="14" viewBox="0 0 16 16" style="color:#000;left:9px;top:5px"><path d="M6.9 2h2.2v4.9H14v2.2H9.1V14H6.9V9.1H2V6.9h4.9z" fill="currentColor"/></svg><span style="left:28px">New record</span></div>
<div class="btn" style="left:515px;top:12px;width:84px"><svg width="16" height="16" viewBox="0 0 16 16" style="color:#000;left:8px;top:4px"><path d="M6.9 1h2.2v4.5h2.6L8 9.6 4.3 5.5h2.6z" fill="currentColor"/><path d="M1.6 10.6h12.8v3.8H1.6z" fill="none" stroke="currentColor" stroke-width="1.2"/><path d="M4.8 10.6L8 12.5l3.2-1.9" fill="none" stroke="currentColor" stroke-width="1"/><path d="M10.5 13h1M12.3 13h1" stroke="currentColor" stroke-width="1"/></svg><span style="left:28px">Download</span></div>
<div class="btn" style="left:603px;top:12px;width:106px"><svg width="16" height="16" viewBox="0 0 16 16" style="color:#000;left:8px;top:4px"><rect x="1.1" y="2.1" width="13.8" height="11.8" fill="none" stroke="currentColor" stroke-width="1.3"/><path d="M3.6 5.4h1.8M3.6 8h1.8M3.6 10.6h1.8M7 5.4h5.4M7 8h5.4M7 10.6h5.4" stroke="currentColor" stroke-width="1.3"/></svg><span style="left:28px">Show columns</span></div>
<div class="btn" style="left:713px;top:12px;width:34px"><svg width="12" height="12" viewBox="0 0 16 16" style="color:#000;left:10px;top:6px"><path d="M3 10.5l5-5 5 5" fill="none" stroke="currentColor" stroke-width="1.5"/></svg></div>
<div class="abs" style="left:0;top:50px;width:763px;height:35px;border-top:1px solid #d4d4d4;background:#fff">
<svg width="16" height="16" viewBox="0 0 16 16" style="color:#111;position:absolute;left:15px;top:9px"><rect x="1.6" y="1.6" width="12.8" height="12.8" rx="1.5" fill="none" stroke="currentColor" stroke-width="1.2" stroke-dasharray="1.6 1.1"/></svg>
<svg width="12" height="12" viewBox="0 0 16 16" style="color:#111;position:absolute;left:35px;top:11px"><path d="M4.8 6.4h6.4L8 9.6z" fill="currentColor"/></svg>
<span class="abs" style="left:66px;top:10px;font-weight:700;font-size:12px;line-height:14px;color:#222;white-space:nowrap">Group Title</span>
<svg width="16" height="16" viewBox="0 0 16 16" style="color:#333;position:absolute;left:132px;top:9px"><path d="M8 1.5v13M5.8 3.8L8 1.5l2.2 2.3M5.8 12.2L8 14.5l2.2-2.3" fill="none" stroke="currentColor" stroke-width="1"/></svg>
<span class="abs" style="left:409px;top:10px;font-weight:700;font-size:12px;line-height:14px;color:#222;white-space:nowrap">Award Categories</span>
<svg width="16" height="16" viewBox="0 0 16 16" style="color:#333;position:absolute;left:513px;top:9px"><path d="M8 1.5v13M5.8 3.8L8 1.5l2.2 2.3M5.8 12.2L8 14.5l2.2-2.3" fill="none" stroke="currentColor" stroke-width="1"/></svg>
</div>
<div class="row" style="top:85px;background:#fafafa">
<div class="cb"></div>
<svg width="16" height="16" viewBox="0 0 16 16" style="position:absolute;left:41px;top:15px"><path d="M7.2 13.2c.2-2.2 1.6-3.4 4-3.4s4 1.2 4.3 3.4z" fill="#9cc45c"/><path d="M9.2 4.3c0-1.6.9-2.7 2.1-2.7s2.1 1.1 2.1 2.7c0 1.2-.5 2.1-1.1 2.6v1.4c0 .9.8 1.2 1.7 1.5l-2.7 1.5L8.6 9.8c.9-.3 1.7-.6 1.7-1.5V6.9c-.6-.5-1.1-1.4-1.1-2.6z" fill="#e9b24a"/><path d="M.4 15.2c.2-2.4 1.8-3.6 4.7-3.6s4.5 1.2 4.7 3.6z" fill="#86b046"/><path d="M2.9 6.3c0-1.7 1-2.9 2.2-2.9S7.3 4.6 7.3 6.3c0 1.2-.5 2.2-1.1 2.7v1.4c0 .9.9 1.3 1.9 1.6l-3 1.6-3-1.6c1-.3 1.9-.7 1.9-1.6V9c-.6-.5-1.1-1.5-1.1-2.7z" fill="#f0bd55"/></svg>
<span class="gt">GDA - Excellent Architecture - J…</span>
<div class="ib" style="left:266px;border-radius:2px 0 0 2px"><svg width="16" height="16" viewBox="0 0 16 16" style="color:#111;"><path d="M10.6 2.6l1.2-1.2c.4-.4 1-.4 1.4 0l1.4 1.4c.4.4.4 1 0 1.4l-1.2 1.2z" fill="currentColor"/><path d="M9.9 3.3l2.8 2.8-7.6 7.6-2.8-2.8z" fill="currentColor"/><path d="M4 12l6.9-6.9" stroke="#ededed" stroke-width=".7"/><path d="M1.9 11.6L1.2 14.8l3.2-.7z" fill="none" stroke="currentColor" stroke-width="1"/></svg></div>
<div class="ib" style="left:295px"><svg width="16" height="16" viewBox="0 0 16 16" style="color:#111;"><rect x="0" y="3" width="16" height="10" rx="5" fill="currentColor"/><circle cx="11" cy="8" r="3.1" fill="#f2f2f2"/></svg></div>
<div class="ib" style="left:324px;border-radius:0 2px 2px 0"><svg width="16" height="16" viewBox="0 0 16 16" style="color:#111;"><path d="M5.6 3V1.6h4.8V3" fill="none" stroke="currentColor" stroke-width="1.3"/><path d="M2 3.4h12" stroke="currentColor" stroke-width="1.4"/><path d="M3.6 3.6v10c0 .7.4 1.1 1.1 1.1h6.6c.7 0 1.1-.4 1.1-1.1v-10" fill="none" stroke="currentColor" stroke-width="1.3"/><path d="M6.6 5.6v6.8M9.4 5.6v6.8" stroke="currentColor" stroke-width="1.2" fill="none"/></svg></div>
<div class="ib" style="left:363px;border-radius:2px"><svg width="16" height="16" viewBox="0 0 16 16" style="color:#111;"><path d="M7 2h2v2H7zM7 7h2v2H7zM7 12h2v2H7z" fill="currentColor"/></svg></div>
<span class="ac">Architecture, Conceptional Architecture, Eco Design, Urban Space and Infrastructure</span>
</div>
<div class="row" style="top:132px;background:#fff">
<div class="cb"></div>
<svg width="16" height="16" viewBox="0 0 16 16" style="position:absolute;left:41px;top:15px"><path d="M7.2 13.2c.2-2.2 1.6-3.4 4-3.4s4 1.2 4.3 3.4z" fill="#9cc45c"/><path d="M9.2 4.3c0-1.6.9-2.7 2.1-2.7s2.1 1.1 2.1 2.7c0 1.2-.5 2.1-1.1 2.6v1.4c0 .9.8 1.2 1.7 1.5l-2.7 1.5L8.6 9.8c.9-.3 1.7-.6 1.7-1.5V6.9c-.6-.5-1.1-1.4-1.1-2.6z" fill="#e9b24a"/><path d="M.4 15.2c.2-2.4 1.8-3.6 4.7-3.6s4.5 1.2 4.7 3.6z" fill="#86b046"/><path d="M2.9 6.3c0-1.7 1-2.9 2.2-2.9S7.3 4.6 7.3 6.3c0 1.2-.5 2.2-1.1 2.7v1.4c0 .9.9 1.3 1.9 1.6l-3 1.6-3-1.6c1-.3 1.9-.7 1.9-1.6V9c-.6-.5-1.1-1.5-1.1-2.7z" fill="#f0bd55"/></svg>
<span class="gt">GDA - Excellent Architecture - J…</span>
<div class="ib" style="left:266px;border-radius:2px 0 0 2px"><svg width="16" height="16" viewBox="0 0 16 16" style="color:#111;"><path d="M10.6 2.6l1.2-1.2c.4-.4 1-.4 1.4 0l1.4 1.4c.4.4.4 1 0 1.4l-1.2 1.2z" fill="currentColor"/><path d="M9.9 3.3l2.8 2.8-7.6 7.6-2.8-2.8z" fill="currentColor"/><path d="M4 12l6.9-6.9" stroke="#ededed" stroke-width=".7"/><path d="M1.9 11.6L1.2 14.8l3.2-.7z" fill="none" stroke="currentColor" stroke-width="1"/></svg></div>
<div class="ib" style="left:295px"><svg width="16" height="16" viewBox="0 0 16 16" style="color:#111;"><rect x="0" y="3" width="16" height="10" rx="5" fill="currentColor"/><circle cx="11" cy="8" r="3.1" fill="#f2f2f2"/></svg></div>
<div class="ib" style="left:324px;border-radius:0 2px 2px 0"><svg width="16" height="16" viewBox="0 0 16 16" style="color:#111;"><path d="M5.6 3V1.6h4.8V3" fill="none" stroke="currentColor" stroke-width="1.3"/><path d="M2 3.4h12" stroke="currentColor" stroke-width="1.4"/><path d="M3.6 3.6v10c0 .7.4 1.1 1.1 1.1h6.6c.7 0 1.1-.4 1.1-1.1v-10" fill="none" stroke="currentColor" stroke-width="1.3"/><path d="M6.6 5.6v6.8M9.4 5.6v6.8" stroke="currentColor" stroke-width="1.2" fill="none"/></svg></div>
<div class="ib" style="left:363px;border-radius:2px"><svg width="16" height="16" viewBox="0 0 16 16" style="color:#111;"><path d="M7 2h2v2H7zM7 7h2v2H7zM7 12h2v2H7z" fill="currentColor"/></svg></div>
<span class="ac">Fair and Exhibition, Interior Architecture, Lighting Design, Retail Architecture</span>
</div>
<div class="row" style="top:179px;background:#fafafa">
<div class="cb"></div>
<svg width="16" height="16" viewBox="0 0 16 16" style="position:absolute;left:41px;top:15px"><path d="M7.2 13.2c.2-2.2 1.6-3.4 4-3.4s4 1.2 4.3 3.4z" fill="#9cc45c"/><path d="M9.2 4.3c0-1.6.9-2.7 2.1-2.7s2.1 1.1 2.1 2.7c0 1.2-.5 2.1-1.1 2.6v1.4c0 .9.8 1.2 1.7 1.5l-2.7 1.5L8.6 9.8c.9-.3 1.7-.6 1.7-1.5V6.9c-.6-.5-1.1-1.4-1.1-2.6z" fill="#e9b24a"/><path d="M.4 15.2c.2-2.4 1.8-3.6 4.7-3.6s4.5 1.2 4.7 3.6z" fill="#86b046"/><path d="M2.9 6.3c0-1.7 1-2.9 2.2-2.9S7.3 4.6 7.3 6.3c0 1.2-.5 2.2-1.1 2.7v1.4c0 .9.9 1.3 1.9 1.6l-3 1.6-3-1.6c1-.3 1.9-.7 1.9-1.6V9c-.6-.5-1.1-1.5-1.1-2.7z" fill="#f0bd55"/></svg>
<span class="gt">GDA - Excellent Communication…</span>
<div class="ib" style="left:266px;border-radius:2px 0 0 2px"><svg width="16" height="16" viewBox="0 0 16 16" style="color:#111;"><path d="M10.6 2.6l1.2-1.2c.4-.4 1-.4 1.4 0l1.4 1.4c.4.4.4 1 0 1.4l-1.2 1.2z" fill="currentColor"/><path d="M9.9 3.3l2.8 2.8-7.6 7.6-2.8-2.8z" fill="currentColor"/><path d="M4 12l6.9-6.9" stroke="#ededed" stroke-width=".7"/><path d="M1.9 11.6L1.2 14.8l3.2-.7z" fill="none" stroke="currentColor" stroke-width="1"/></svg></div>
<div class="ib" style="left:295px"><svg width="16" height="16" viewBox="0 0 16 16" style="color:#111;"><rect x="0" y="3" width="16" height="10" rx="5" fill="currentColor"/><circle cx="11" cy="8" r="3.1" fill="#f2f2f2"/></svg></div>
<div class="ib" style="left:324px;border-radius:0 2px 2px 0"><svg width="16" height="16" viewBox="0 0 16 16" style="color:#111;"><path d="M5.6 3V1.6h4.8V3" fill="none" stroke="currentColor" stroke-width="1.3"/><path d="M2 3.4h12" stroke="currentColor" stroke-width="1.4"/><path d="M3.6 3.6v10c0 .7.4 1.1 1.1 1.1h6.6c.7 0 1.1-.4 1.1-1.1v-10" fill="none" stroke="currentColor" stroke-width="1.3"/><path d="M6.6 5.6v6.8M9.4 5.6v6.8" stroke="currentColor" stroke-width="1.2" fill="none"/></svg></div>
<div class="ib" style="left:363px;border-radius:2px"><svg width="16" height="16" viewBox="0 0 16 16" style="color:#111;"><path d="M7 2h2v2H7zM7 7h2v2H7zM7 12h2v2H7z" fill="currentColor"/></svg></div>
<span class="ac">Books and Calendars, Editorial, Packaging, Posters, Cards and Photography</span>
</div>
<div class="row" style="top:226px;background:#fff">
<div class="cb"></div>
<svg width="16" height="16" viewBox="0 0 16 16" style="position:absolute;left:41px;top:15px"><path d="M7.2 13.2c.2-2.2 1.6-3.4 4-3.4s4 1.2 4.3 3.4z" fill="#9cc45c"/><path d="M9.2 4.3c0-1.6.9-2.7 2.1-2.7s2.1 1.1 2.1 2.7c0 1.2-.5 2.1-1.1 2.6v1.4c0 .9.8 1.2 1.7 1.5l-2.7 1.5L8.6 9.8c.9-.3 1.7-.6 1.7-1.5V6.9c-.6-.5-1.1-1.4-1.1-2.6z" fill="#e9b24a"/><path d="M.4 15.2c.2-2.4 1.8-3.6 4.7-3.6s4.5 1.2 4.7 3.6z" fill="#86b046"/><path d="M2.9 6.3c0-1.7 1-2.9 2.2-2.9S7.3 4.6 7.3 6.3c0 1.2-.5 2.2-1.1 2.7v1.4c0 .9.9 1.3 1.9 1.6l-3 1.6-3-1.6c1-.3 1.9-.7 1.9-1.6V9c-.6-.5-1.1-1.5-1.1-2.7z" fill="#f0bd55"/></svg>
<span class="gt">GDA - Excellent Communication…</span>
<div class="ib" style="left:266px;border-radius:2px 0 0 2px"><svg width="16" height="16" viewBox="0 0 16 16" style="color:#111;"><path d="M10.6 2.6l1.2-1.2c.4-.4 1-.4 1.4 0l1.4 1.4c.4.4.4 1 0 1.4l-1.2 1.2z" fill="currentColor"/><path d="M9.9 3.3l2.8 2.8-7.6 7.6-2.8-2.8z" fill="currentColor"/><path d="M4 12l6.9-6.9" stroke="#ededed" stroke-width=".7"/><path d="M1.9 11.6L1.2 14.8l3.2-.7z" fill="none" stroke="currentColor" stroke-width="1"/></svg></div>
<div class="ib" style="left:295px"><svg width="16" height="16" viewBox="0 0 16 16" style="color:#111;"><rect x="0" y="3" width="16" height="10" rx="5" fill="currentColor"/><circle cx="11" cy="8" r="3.1" fill="#f2f2f2"/></svg></div>
<div class="ib" style="left:324px;border-radius:0 2px 2px 0"><svg width="16" height="16" viewBox="0 0 16 16" style="color:#111;"><path d="M5.6 3V1.6h4.8V3" fill="none" stroke="currentColor" stroke-width="1.3"/><path d="M2 3.4h12" stroke="currentColor" stroke-width="1.4"/><path d="M3.6 3.6v10c0 .7.4 1.1 1.1 1.1h6.6c.7 0 1.1-.4 1.1-1.1v-10" fill="none" stroke="currentColor" stroke-width="1.3"/><path d="M6.6 5.6v6.8M9.4 5.6v6.8" stroke="currentColor" stroke-width="1.2" fill="none"/></svg></div>
<div class="ib" style="left:363px;border-radius:2px"><svg width="16" height="16" viewBox="0 0 16 16" style="color:#111;"><path d="M7 2h2v2H7zM7 7h2v2H7zM7 12h2v2H7z" fill="currentColor"/></svg></div>
<span class="ac">Brand Identity, Corporate Identity, Event, Integrated Campaigns and Advertising</span>
</div>
<div class="row" style="top:273px;background:#fafafa">
<div class="cb"></div>
<svg width="16" height="16" viewBox="0 0 16 16" style="position:absolute;left:41px;top:15px"><path d="M7.2 13.2c.2-2.2 1.6-3.4 4-3.4s4 1.2 4.3 3.4z" fill="#9cc45c"/><path d="M9.2 4.3c0-1.6.9-2.7 2.1-2.7s2.1 1.1 2.1 2.7c0 1.2-.5 2.1-1.1 2.6v1.4c0 .9.8 1.2 1.7 1.5l-2.7 1.5L8.6 9.8c.9-.3 1.7-.6 1.7-1.5V6.9c-.6-.5-1.1-1.4-1.1-2.6z" fill="#e9b24a"/><path d="M.4 15.2c.2-2.4 1.8-3.6 4.7-3.6s4.5 1.2 4.7 3.6z" fill="#86b046"/><path d="M2.9 6.3c0-1.7 1-2.9 2.2-2.9S7.3 4.6 7.3 6.3c0 1.2-.5 2.2-1.1 2.7v1.4c0 .9.9 1.3 1.9 1.6l-3 1.6-3-1.6c1-.3 1.9-.7 1.9-1.6V9c-.6-.5-1.1-1.5-1.1-2.7z" fill="#f0bd55"/></svg>
<span class="gt">GDA - Excellent Communication…</span>
<div class="ib" style="left:266px;border-radius:2px 0 0 2px"><svg width="16" height="16" viewBox="0 0 16 16" style="color:#111;"><path d="M10.6 2.6l1.2-1.2c.4-.4 1-.4 1.4 0l1.4 1.4c.4.4.4 1 0 1.4l-1.2 1.2z" fill="currentColor"/><path d="M9.9 3.3l2.8 2.8-7.6 7.6-2.8-2.8z" fill="currentColor"/><path d="M4 12l6.9-6.9" stroke="#ededed" stroke-width=".7"/><path d="M1.9 11.6L1.2 14.8l3.2-.7z" fill="none" stroke="currentColor" stroke-width="1"/></svg></div>
<div class="ib" style="left:295px"><svg width="16" height="16" viewBox="0 0 16 16" style="color:#111;"><rect x="0" y="3" width="16" height="10" rx="5" fill="currentColor"/><circle cx="11" cy="8" r="3.1" fill="#f2f2f2"/></svg></div>
<div class="ib" style="left:324px;border-radius:0 2px 2px 0"><svg width="16" height="16" viewBox="0 0 16 16" style="color:#111;"><path d="M5.6 3V1.6h4.8V3" fill="none" stroke="currentColor" stroke-width="1.3"/><path d="M2 3.4h12" stroke="currentColor" stroke-width="1.4"/><path d="M3.6 3.6v10c0 .7.4 1.1 1.1 1.1h6.6c.7 0 1.1-.4 1.1-1.1v-10" fill="none" stroke="currentColor" stroke-width="1.3"/><path d="M6.6 5.6v6.8M9.4 5.6v6.8" stroke="currentColor" stroke-width="1.2" fill="none"/></svg></div>
<div class="ib" style="left:363px;border-radius:2px"><svg width="16" height="16" viewBox="0 0 16 16" style="color:#111;"><path d="M7 2h2v2H7zM7 7h2v2H7zM7 12h2v2H7z" fill="currentColor"/></svg></div>
<span class="ac">Design Classics and Re-editions, Eco Design, Online Publications, Typography</span>
</div>
<div class="row" style="top:320px;background:#fff">
<div class="cb"></div>
<svg width="16" height="16" viewBox="0 0 16 16" style="position:absolute;left:41px;top:15px"><path d="M7.2 13.2c.2-2.2 1.6-3.4 4-3.4s4 1.2 4.3 3.4z" fill="#9cc45c"/><path d="M9.2 4.3c0-1.6.9-2.7 2.1-2.7s2.1 1.1 2.1 2.7c0 1.2-.5 2.1-1.1 2.6v1.4c0 .9.8 1.2 1.7 1.5l-2.7 1.5L8.6 9.8c.9-.3 1.7-.6 1.7-1.5V6.9c-.6-.5-1.1-1.4-1.1-2.6z" fill="#e9b24a"/><path d="M.4 15.2c.2-2.4 1.8-3.6 4.7-3.6s4.5 1.2 4.7 3.6z" fill="#86b046"/><path d="M2.9 6.3c0-1.7 1-2.9 2.2-2.9S7.3 4.6 7.3 6.3c0 1.2-.5 2.2-1.1 2.7v1.4c0 .9.9 1.3 1.9 1.6l-3 1.6-3-1.6c1-.3 1.9-.7 1.9-1.6V9c-.6-.5-1.1-1.5-1.1-2.7z" fill="#f0bd55"/></svg>
<span class="gt">GDA - Excellent Communication…</span>
<div class="ib" style="left:266px;border-radius:2px 0 0 2px"><svg width="16" height="16" viewBox="0 0 16 16" style="color:#111;"><path d="M10.6 2.6l1.2-1.2c.4-.4 1-.4 1.4 0l1.4 1.4c.4.4.4 1 0 1.4l-1.2 1.2z" fill="currentColor"/><path d="M9.9 3.3l2.8 2.8-7.6 7.6-2.8-2.8z" fill="currentColor"/><path d="M4 12l6.9-6.9" stroke="#ededed" stroke-width=".7"/><path d="M1.9 11.6L1.2 14.8l3.2-.7z" fill="none" stroke="currentColor" stroke-width="1"/></svg></div>
<div class="ib" style="left:295px"><svg width="16" height="16" viewBox="0 0 16 16" style="color:#111;"><rect x="0" y="3" width="16" height="10" rx="5" fill="currentColor"/><circle cx="11" cy="8" r="3.1" fill="#f2f2f2"/></svg></div>
<div class="ib" style="left:324px;border-radius:0 2px 2px 0"><svg width="16" height="16" viewBox="0 0 16 16" style="color:#111;"><path d="M5.6 3V1.6h4.8V3" fill="none" stroke="currentColor" stroke-width="1.3"/><path d="M2 3.4h12" stroke="currentColor" stroke-width="1.4"/><path d="M3.6 3.6v10c0 .7.4 1.1 1.1 1.1h6.6c.7 0 1.1-.4 1.1-1.1v-10" fill="none" stroke="currentColor" stroke-width="1.3"/><path d="M6.6 5.6v6.8M9.4 5.6v6.8" stroke="currentColor" stroke-width="1.2" fill="none"/></svg></div>
<div class="ib" style="left:363px;border-radius:2px"><svg width="16" height="16" viewBox="0 0 16 16" style="color:#111;"><path d="M7 2h2v2H7zM7 7h2v2H7zM7 12h2v2H7z" fill="currentColor"/></svg></div>
<span class="ac">Apps, Audiovisual, Computer and Communication, Entertainment, Gaming</span>
</div>
<div class="row" style="top:367px;background:#fafafa">
<div class="cb"></div>
<svg width="16" height="16" viewBox="0 0 16 16" style="position:absolute;left:41px;top:15px"><path d="M7.2 13.2c.2-2.2 1.6-3.4 4-3.4s4 1.2 4.3 3.4z" fill="#9cc45c"/><path d="M9.2 4.3c0-1.6.9-2.7 2.1-2.7s2.1 1.1 2.1 2.7c0 1.2-.5 2.1-1.1 2.6v1.4c0 .9.8 1.2 1.7 1.5l-2.7 1.5L8.6 9.8c.9-.3 1.7-.6 1.7-1.5V6.9c-.6-.5-1.1-1.4-1.1-2.6z" fill="#e9b24a"/><path d="M.4 15.2c.2-2.4 1.8-3.6 4.7-3.6s4.5 1.2 4.7 3.6z" fill="#86b046"/><path d="M2.9 6.3c0-1.7 1-2.9 2.2-2.9S7.3 4.6 7.3 6.3c0 1.2-.5 2.2-1.1 2.7v1.4c0 .9.9 1.3 1.9 1.6l-3 1.6-3-1.6c1-.3 1.9-.7 1.9-1.6V9c-.6-.5-1.1-1.5-1.1-2.7z" fill="#f0bd55"/></svg>
<span class="gt">GDA - Excellent Product Design…</span>
<div class="ib" style="left:266px;border-radius:2px 0 0 2px"><svg width="16" height="16" viewBox="0 0 16 16" style="color:#111;"><path d="M10.6 2.6l1.2-1.2c.4-.4 1-.4 1.4 0l1.4 1.4c.4.4.4 1 0 1.4l-1.2 1.2z" fill="currentColor"/><path d="M9.9 3.3l2.8 2.8-7.6 7.6-2.8-2.8z" fill="currentColor"/><path d="M4 12l6.9-6.9" stroke="#ededed" stroke-width=".7"/><path d="M1.9 11.6L1.2 14.8l3.2-.7z" fill="none" stroke="currentColor" stroke-width="1"/></svg></div>
<div class="ib" style="left:295px"><svg width="16" height="16" viewBox="0 0 16 16" style="color:#111;"><rect x="0" y="3" width="16" height="10" rx="5" fill="currentColor"/><circle cx="11" cy="8" r="3.1" fill="#f2f2f2"/></svg></div>
<div class="ib" style="left:324px;border-radius:0 2px 2px 0"><svg width="16" height="16" viewBox="0 0 16 16" style="color:#111;"><path d="M5.6 3V1.6h4.8V3" fill="none" stroke="currentColor" stroke-width="1.3"/><path d="M2 3.4h12" stroke="currentColor" stroke-width="1.4"/><path d="M3.6 3.6v10c0 .7.4 1.1 1.1 1.1h6.6c.7 0 1.1-.4 1.1-1.1v-10" fill="none" stroke="currentColor" stroke-width="1.3"/><path d="M6.6 5.6v6.8M9.4 5.6v6.8" stroke="currentColor" stroke-width="1.2" fill="none"/></svg></div>
<div class="ib" style="left:363px;border-radius:2px"><svg width="16" height="16" viewBox="0 0 16 16" style="color:#111;"><path d="M7 2h2v2H7zM7 7h2v2H7zM7 12h2v2H7z" fill="currentColor"/></svg></div>
<span class="ac">Design Classics and Re-editions, Furniture, Home Textiles and Home Accessories</span>
</div>
<div class="row" style="top:414px;background:#fff">
<div class="cb"></div>
<svg width="16" height="16" viewBox="0 0 16 16" style="position:absolute;left:41px;top:15px"><path d="M7.2 13.2c.2-2.2 1.6-3.4 4-3.4s4 1.2 4.3 3.4z" fill="#9cc45c"/><path d="M9.2 4.3c0-1.6.9-2.7 2.1-2.7s2.1 1.1 2.1 2.7c0 1.2-.5 2.1-1.1 2.6v1.4c0 .9.8 1.2 1.7 1.5l-2.7 1.5L8.6 9.8c.9-.3 1.7-.6 1.7-1.5V6.9c-.6-.5-1.1-1.4-1.1-2.6z" fill="#e9b24a"/><path d="M.4 15.2c.2-2.4 1.8-3.6 4.7-3.6s4.5 1.2 4.7 3.6z" fill="#86b046"/><path d="M2.9 6.3c0-1.7 1-2.9 2.2-2.9S7.3 4.6 7.3 6.3c0 1.2-.5 2.2-1.1 2.7v1.4c0 .9.9 1.3 1.9 1.6l-3 1.6-3-1.6c1-.3 1.9-.7 1.9-1.6V9c-.6-.5-1.1-1.5-1.1-2.7z" fill="#f0bd55"/></svg>
<span class="gt">GDA - Excellent Product Design…</span>
<div class="ib" style="left:266px;border-radius:2px 0 0 2px"><svg width="16" height="16" viewBox="0 0 16 16" style="color:#111;"><path d="M10.6 2.6l1.2-1.2c.4-.4 1-.4 1.4 0l1.4 1.4c.4.4.4 1 0 1.4l-1.2 1.2z" fill="currentColor"/><path d="M9.9 3.3l2.8 2.8-7.6 7.6-2.8-2.8z" fill="currentColor"/><path d="M4 12l6.9-6.9" stroke="#ededed" stroke-width=".7"/><path d="M1.9 11.6L1.2 14.8l3.2-.7z" fill="none" stroke="currentColor" stroke-width="1"/></svg></div>
<div class="ib" style="left:295px"><svg width="16" height="16" viewBox="0 0 16 16" style="color:#111;"><rect x="0" y="3" width="16" height="10" rx="5" fill="currentColor"/><circle cx="11" cy="8" r="3.1" fill="#f2f2f2"/></svg></div>
<div class="ib" style="left:324px;border-radius:0 2px 2px 0"><svg width="16" height="16" viewBox="0 0 16 16" style="color:#111;"><path d="M5.6 3V1.6h4.8V3" fill="none" stroke="currentColor" stroke-width="1.3"/><path d="M2 3.4h12" stroke="currentColor" stroke-width="1.4"/><path d="M3.6 3.6v10c0 .7.4 1.1 1.1 1.1h6.6c.7 0 1.1-.4 1.1-1.1v-10" fill="none" stroke="currentColor" stroke-width="1.3"/><path d="M6.6 5.6v6.8M9.4 5.6v6.8" stroke="currentColor" stroke-width="1.2" fill="none"/></svg></div>
<div class="ib" style="left:363px;border-radius:2px"><svg width="16" height="16" viewBox="0 0 16 16" style="color:#111;"><path d="M7 2h2v2H7zM7 7h2v2H7zM7 12h2v2H7z" fill="currentColor"/></svg></div>
<span class="ac">Building and Elements, Energy, Industry, Material and Surfaces, Workshop and Tools</span>
</div>
</div>
</div><div id="rightedge"></div>
</body></html>
